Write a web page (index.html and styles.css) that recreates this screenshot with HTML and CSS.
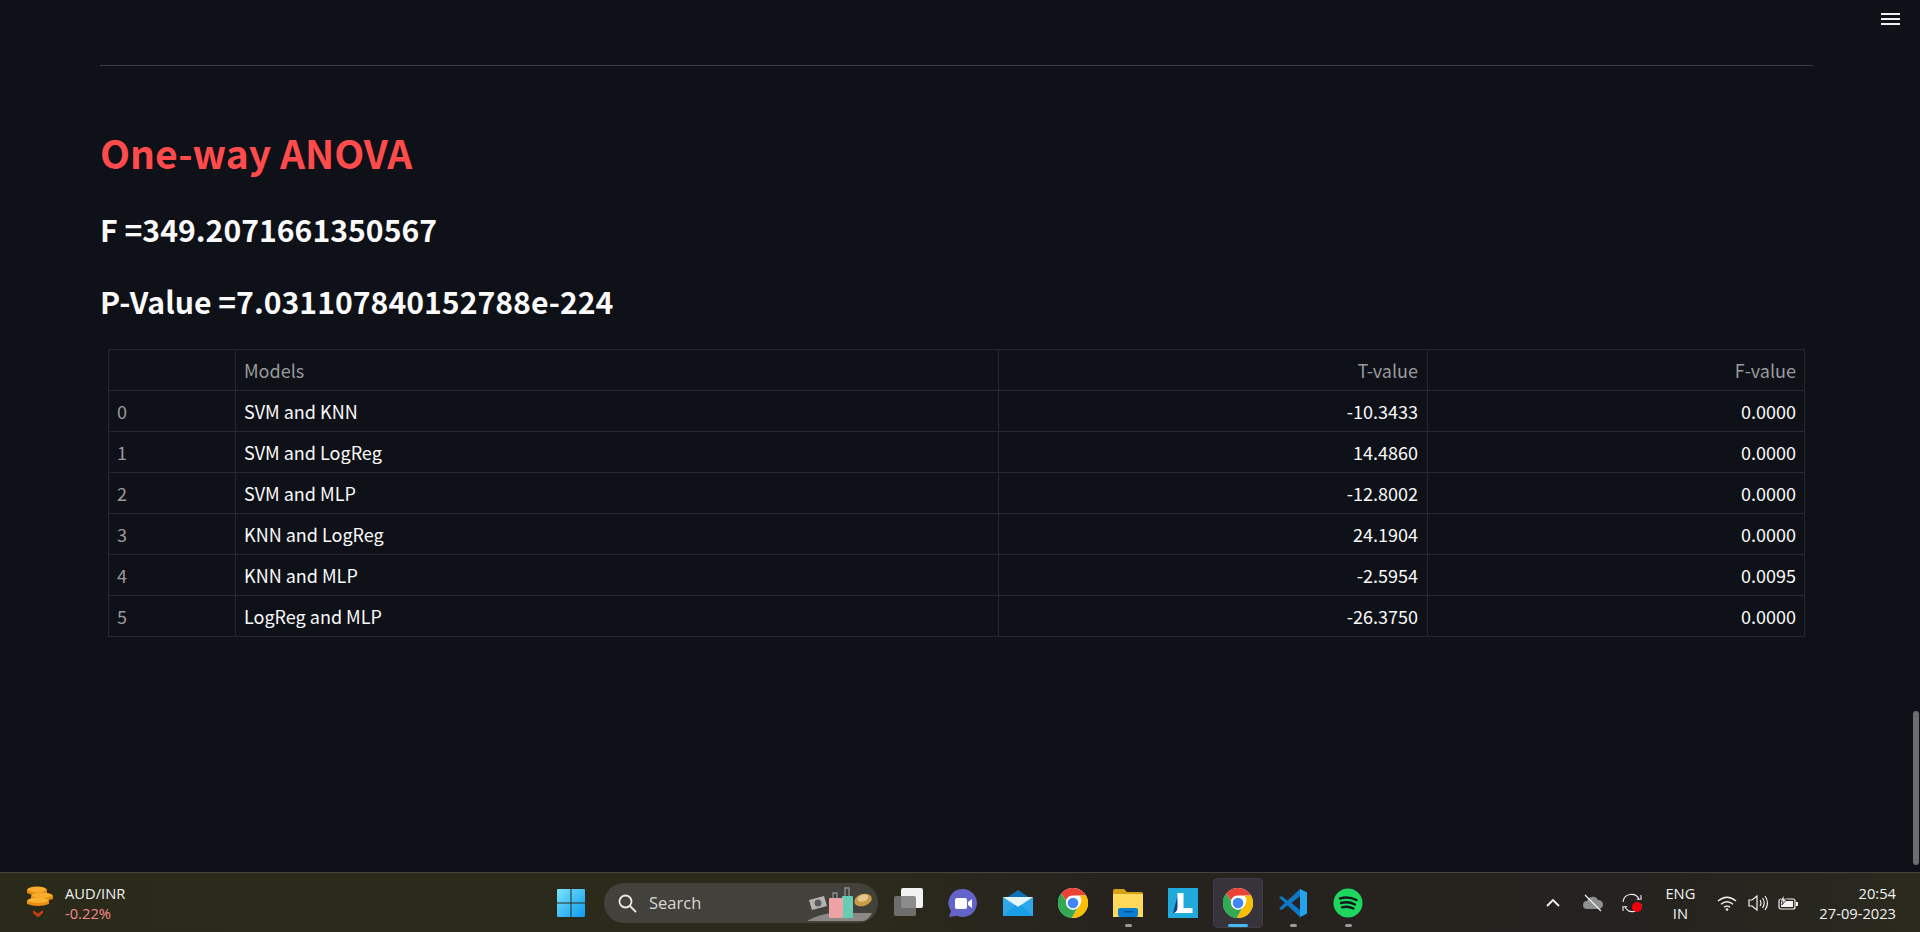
FILE: index.html

```html
<!DOCTYPE html>
<html lang="en">
<head>
  <meta charset="UTF-8">
  <title>One-way ANOVA</title>
  <link rel="stylesheet" href="styles.css">
</head>
<body>

<svg class="defs" width="0" height="0">
  <symbol id="chrome" viewBox="0 0 48 48">
    <circle cx="24" cy="24" r="24" fill="#fff"/>
    <path d="M24 0a24 24 0 0 1 20.8 12H24a12 12 0 0 0-11.3 8L5 8.6A24 24 0 0 1 24 0z" fill="#ea4335"/>
    <path d="M44.800 12A24 24 0 0 1 22 48l10-18a12 12 0 0 0 2.400-18z" fill="#fbbc04"/>
    <path d="M5 8.600A24 24 0 0 0 22 48l10-18a12 12 0 0 1-19.300-10z" fill="#34a853"/>
    <circle cx="24" cy="24" r="11" fill="#fff"/>
    <circle cx="24" cy="24" r="8.500" fill="#4285f4"/>
  </symbol>
</svg>

<main class="page">
  <hr class="rule">
  <h1 class="titulo">One-way ANOVA</h1>
  <h2 class="resultado">F =349.2071661350567</h2>
  <h2 class="resultado">P-Value =7.031107840152788e-224</h2>

  <table class="tabla">
    <colgroup>
      <col class="col-idx"><col class="col-models"><col class="col-t"><col>
    </colgroup>
    <thead>
      <tr><th></th><th>Models</th><th class="num">T-value</th><th class="num">F-value</th></tr>
    </thead>
    <tbody>
      <tr><th>0</th><td>SVM and KNN</td><td class="num">-10.3433</td><td class="num">0.0000</td></tr>
      <tr><th>1</th><td>SVM and LogReg</td><td class="num">14.4860</td><td class="num">0.0000</td></tr>
      <tr><th>2</th><td>SVM and MLP</td><td class="num">-12.8002</td><td class="num">0.0000</td></tr>
      <tr><th>3</th><td>KNN and LogReg</td><td class="num">24.1904</td><td class="num">0.0000</td></tr>
      <tr><th>4</th><td>KNN and MLP</td><td class="num">-2.5954</td><td class="num">0.0095</td></tr>
      <tr><th>5</th><td>LogReg and MLP</td><td class="num">-26.3750</td><td class="num">0.0000</td></tr>
    </tbody>
  </table>

  <div class="menu"><span></span><span></span><span></span></div>
  <div class="scroll-thumb"></div>
</main>

<footer class="taskbar">
  <div class="widget">
    <svg class="coins" width="30" height="36" viewBox="0 0 30 36">
      <ellipse cx="12" cy="5" rx="10" ry="3.500" fill="#f9ad2a"/>
      <path d="M2 5v3q10 5 20 0V5q-10 5-20 0z" fill="#e48a10"/>
      <ellipse cx="17" cy="11" rx="11" ry="3.500" fill="#f9ad2a"/>
      <path d="M6 11v3q11 4 22 0v-3q-11 4-22 0z" fill="#e48a10"/>
      <ellipse cx="13" cy="16" rx="11" ry="3.500" fill="#fbb32e"/>
      <path d="M2 16v3q11 4 22 0v-3q-11 4-22 0z" fill="#e98f12"/>
      <path d="M8 25l5 3.500 5-3.500v3l-5 4.500-5-4.500z" fill="#c43e12"/>
    </svg>
    <div class="widget-text">
      <div>AUD/INR</div>
      <div class="baja">-0.22%</div>
    </div>
  </div>

  <div class="apps">
    <div class="app">
      <svg width="30" height="30" viewBox="0 0 30 30">
        <defs>
          <linearGradient id="win" x1="0" y1="0" x2="1" y2="1">
            <stop offset="0" stop-color="#7be3fc"/>
            <stop offset="1" stop-color="#0a9bf0"/>
          </linearGradient>
        </defs>
        <path d="M1 2a1 1 0 0 1 1-1h12.500v13.500H1zM15.500 1H28a1 1 0 0 1 1 1v12.500H15.500zM1 15.500h13.500V29H2a1 1 0 0 1-1-1zM15.500 15.500H29V28a1 1 0 0 1-1 1H15.500z" fill="url(#win)"/>
      </svg>
    </div>

    <div class="search">
      <svg width="20" height="20" viewBox="0 0 20 20" fill="none" stroke="#e8e8e8" stroke-width="1.800">
        <circle cx="8.500" cy="8.500" r="6"/>
        <path d="M13 13l5.500 5.500" stroke-linecap="round"/>
      </svg>
      <span class="search-label">Search</span>
      <svg class="search-art" width="72" height="40" viewBox="0 0 72 40">
        <path d="M4 38q10-6 24-8h41q-2 5-8 8z" fill="#8b8885"/>
        <path d="M6 17l15-4 3 10-15 4z" fill="#b3b3b3"/>
        <circle cx="15" cy="20" r="3.500" fill="#5b5b5b"/>
        <path d="M30 15v-5h4v5M42 13V5h4v8" fill="none" stroke="#8f8f96" stroke-width="1.300"/>
        <rect x="39" y="13" width="11" height="22" rx="1" fill="#66cdb4"/>
        <rect x="26" y="15" width="14" height="20" rx="1" fill="#eda3a3"/>
        <ellipse cx="60" cy="17" rx="9" ry="6" transform="rotate(-18 60 17)" fill="#c89b45"/>
        <ellipse cx="60" cy="15" rx="5.500" ry="3.500" transform="rotate(-18 60 15)" fill="#e3c889"/>
      </svg>
    </div>

    <div class="app">
      <svg width="29" height="29" viewBox="0 0 29 29">
        <rect x="7" y="0" width="22" height="20" rx="2" fill="#f2f2f2"/>
        <rect x="0" y="8" width="22" height="20" rx="2" fill="#7a7a7a" fill-opacity=".85"/>
      </svg>
    </div>

    <div class="app">
      <svg width="30" height="30" viewBox="0 0 30 30">
        <path d="M15 1a14 14 0 1 1-6 26.700L1 29l2-6A14 14 0 0 1 15 1z" fill="#6264c9"/>
        <rect x="7" y="10" width="12" height="11" rx="2" fill="#fff"/>
        <path d="M20 14l4-3v9l-4-3z" fill="#fff"/>
      </svg>
    </div>

    <div class="app">
      <svg width="30" height="30" viewBox="0 0 30 30">
        <path d="M15 2l15 10v15H0V12z" fill="#0c6fb8"/>
        <path d="M0 9h30v19H0z" fill="#2fa8ea"/>
        <path d="M0 9h30L15 19z" fill="#e6f4fc"/>
        <path d="M0 28l12-11 3 2 3-2 12 11z" fill="#19a0e6"/>
      </svg>
    </div>

    <div class="app"><svg width="30" height="30"><use href="#chrome"/></svg></div>

    <div class="app">
      <svg width="30" height="28" viewBox="0 0 30 28">
        <path d="M0 2a2 2 0 0 1 2-2h9l3 3h14a2 2 0 0 1 2 2v3H0z" fill="#d9a016"/>
        <path d="M0 5h30v23H0z" fill="#ffd95c"/>
        <rect x="5" y="19" width="20" height="9" rx="2" fill="#0a7ed4"/>
        <rect x="11" y="22" width="9" height="1.500" fill="#0b4f8c"/>
      </svg>
      <i class="punto"></i>
    </div>

    <div class="app">
      <svg width="30" height="30" viewBox="0 0 30 30">
        <rect width="30" height="30" fill="#20aadb"/>
        <path d="M9.500 8L5 25h5.500z" fill="#143d7f"/>
        <path d="M9.500 5h6v15h9v5H6c2.500-1 3.500-3 3.500-6z" fill="#fff"/>
      </svg>
    </div>

    <div class="app activa">
      <svg width="30" height="30"><use href="#chrome"/></svg>
      <i class="punto largo"></i>
    </div>

    <div class="app">
      <svg width="30" height="30" viewBox="0 0 30 30">
        <path d="M22 1l7 3.500v21L22 29 9.500 17.500 3.500 22 1 20.500 7 15 1 9.500 3.500 8l6 4.500z" fill="#0f78c4"/>
        <path d="M22 8l-8.500 7 8.500 7z" fill="#252327"/>
        <path d="M22 1l7 3.500v21L22 29z" fill="#23a3ea"/>
      </svg>
      <i class="punto"></i>
    </div>

    <div class="app">
      <svg width="30" height="30" viewBox="0 0 30 30">
        <circle cx="15" cy="15" r="14.500" fill="#1ed760"/>
        <path d="M7 10.500q8.500-2.500 16.500 1.500M8 15q7.500-2 14 1.500M9 19.300q6-1.600 11.500 1.200" fill="none" stroke="#14181a" stroke-width="2.400" stroke-linecap="round"/>
      </svg>
      <i class="punto"></i>
    </div>
  </div>

  <div class="tray">
    <svg class="t-chevron" width="14" height="10" viewBox="0 0 14 10" fill="none" stroke="#f4f4f4" stroke-width="1.800">
      <path d="M1 8l6-6 6 6"/>
    </svg>
    <svg class="t-cloud" width="22" height="18" viewBox="0 0 22 18">
      <path d="M5 15a4 4 0 0 1 0-8 6 6 0 0 1 11-1 4.500 4.500 0 0 1 1 9z" fill="#8f8f8f"/>
      <path d="M3 1l16 16" stroke="#f0f0f0" stroke-width="1.300"/>
    </svg>
    <svg class="t-sync" width="22" height="22" viewBox="0 0 22 22" fill="none" stroke="#eee" stroke-width="1.100">
      <path d="M2 10a8.500 8.500 0 0 1 16-3M20 3v4.300h-4.300M20 12a8.500 8.500 0 0 1-16 3M2 19v-4.300h4.300"/>
      <circle cx="16" cy="15" r="5" fill="#f5000a" stroke="none"/>
    </svg>
    <div class="t-lang"><div>ENG</div><div>IN</div></div>
    <svg class="t-wifi" width="20" height="16" viewBox="0 0 20 16" fill="none" stroke="#f2f2f2" stroke-width="1.400">
      <path d="M1 6q9-7.500 18 0M4 9.300q6-5 12 0M7 12.300q3-2.300 6 0"/>
      <circle cx="10" cy="14.500" r="1.300" fill="#f2f2f2" stroke="none"/>
    </svg>
    <svg class="t-vol" width="21" height="18" viewBox="0 0 21 18" fill="none" stroke="#f2f2f2" stroke-width="1.200">
      <path d="M1 6h3l5-4v14l-5-4H1z"/>
      <path d="M12 6q2 3 0 6M14.500 4q3.500 5 0 10M17 2q5 7 0 14"/>
    </svg>
    <svg class="t-bat" width="21" height="16" viewBox="0 0 21 16">
      <rect x="1" y="4" width="16" height="10" rx="2" fill="none" stroke="#f2f2f2" stroke-width="1.200"/>
      <rect x="3" y="6" width="12" height="6" fill="#f2f2f2"/>
      <rect x="18" y="7" width="2" height="4" fill="#f2f2f2"/>
      <path d="M6 0L2 6h3l-1 4 5-6H6z" fill="#f2f2f2" stroke="#25221f" stroke-width=".800"/>
    </svg>
    <div class="t-clock"><div>20:54</div><div>27-09-2023</div></div>
  </div>
</footer>

</body>
</html>
```

FILE: styles.css

```css
html, body {
  margin: 0;
  height: 100%;
  overflow: hidden;
}
body {
  display: flex;
  flex-direction: column;
  background: #0e1117;
  color: #fafafa;
  font-family: "Noto Sans CJK SC", "Noto Sans", sans-serif;
}
.defs {
  position: absolute;
}

.page {
  position: relative;
  flex: 1;
  padding: 65px 107px 0 100px;
}
.rule {
  margin: 0;
  border: none;
  border-top: 1px solid #3b3d42;
}
.titulo {
  margin: 50px 0 0;
  font-size: 39px;
  line-height: 72px;
  font-weight: 600;
  color: #ff4b4b;
}
.resultado {
  margin: 13px 0 0;
  font-size: 30.2px;
  line-height: 56px;
  font-weight: 600;
}
.resultado + .resultado {
  margin-top: 16px;
}

.tabla {
  width: 1697px;
  margin: 20px 8px 0;
  border-collapse: collapse;
  table-layout: fixed;
  font-size: 18px;
}
.col-idx { width: 127px; }
.col-models { width: 763px; }
.col-t { width: 429px; }
.tabla th,
.tabla td {
  height: 39px;
  padding: 0 8px 1px;
  border: 1px solid #26282e;
  font-weight: 400;
  text-align: left;
  color: #fafafa;
}
.tabla th,
.tabla thead th {
  color: #999a9e;
}
.tabla .num {
  text-align: right;
}
.tabla .num:nth-child(3) {
  padding-right: 9px;
}

.menu {
  position: absolute;
  top: 13px;
  right: 20px;
  display: flex;
  flex-direction: column;
  gap: 3px;
}
.menu span {
  width: 19px;
  height: 2px;
  background: #f0f0f0;
}
.scroll-thumb {
  position: absolute;
  top: 711px;
  right: 1px;
  width: 6px;
  height: 154px;
  border-radius: 3px;
  background: #6c6c72;
}

.taskbar {
  display: flex;
  align-items: center;
  height: 59px;
  border-top: 1px solid #45453f;
  background: linear-gradient(90deg, #2a2a1a 0%, #2b2a1b 45%, #26231f 58%, #25221f 85%, #2a2a1e 100%);
  font-family: "Open Sans", "Noto Sans", sans-serif;
  font-size: 14.7px;
  color: #f2f2f2;
}
.widget {
  display: flex;
  align-items: center;
  width: 546px;
  padding-left: 25px;
  box-sizing: content-box;
  flex: none;
  margin-right: -25px;
}
.widget-text {
  margin-left: 10px;
  line-height: 20px;
}
.baja {
  color: #f58a8f;
}

.apps {
  display: flex;
  align-items: center;
  gap: 5px;
}
.app {
  position: relative;
  display: flex;
  align-items: center;
  justify-content: center;
  width: 50px;
  height: 50px;
  border-radius: 5px;
}
.app.activa {
  background: #36343a;
  box-shadow: inset 0 0 0 1px #403e44;
}
.punto {
  position: absolute;
  bottom: 1px;
  left: 22px;
  width: 7px;
  height: 3px;
  border-radius: 2px;
  background: #9a9a9a;
}
.punto.largo {
  left: 15px;
  width: 20px;
  background: #46b8f5;
}
.search {
  display: flex;
  align-items: center;
  width: 274px;
  height: 40px;
  box-sizing: border-box;
  padding-left: 13px;
  margin-left: 3px;
  border-radius: 20px;
  background: #43413b;
  position: relative;
  overflow: hidden;
}
.search-label {
  margin-left: 12px;
  font-size: 16.5px;
  color: #d8d8d4;
}
.search-art {
  position: absolute;
  right: 3px;
  top: 0;
}

.tray {
  display: flex;
  align-items: center;
  margin-left: auto;
  padding-right: 24px;
}
.t-cloud { margin-left: 22px; }
.t-sync { margin-left: 17px; }
.t-lang {
  margin-left: 22px;
  text-align: center;
  line-height: 20px;
}
.t-wifi { margin-left: 22px; }
.t-vol { margin-left: 11px; }
.t-bat { margin-left: 9px; }
.t-clock {
  margin-left: 20px;
  text-align: right;
  line-height: 20px;
}
```
